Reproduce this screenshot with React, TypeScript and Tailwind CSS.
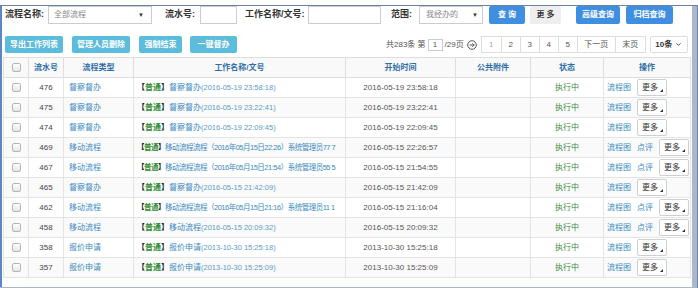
import { ChevronDown } from 'lucide-react'

interface Row {
  id: string
  type: string
  title: string
  extra: string
  time: string
  review: boolean
  long?: boolean
}

const rows: Row[] = [
  { id: '476', type: '督察督办', title: '督察督办', extra: '(2016-05-19 23:58:18)', time: '2016-05-19 23:58:18', review: false },
  { id: '475', type: '督察督办', title: '督察督办', extra: '(2016-05-19 23:22:41)', time: '2016-05-19 23:22:41', review: false },
  { id: '474', type: '督察督办', title: '督察督办', extra: '(2016-05-19 22:09:45)', time: '2016-05-19 22:09:45', review: false },
  { id: '469', type: '移动流程', title: '移动流程流程', extra: '（2016年05月15日22:26）系统管理员77 7', time: '2016-05-15 22:26:57', review: true, long: true },
  { id: '467', type: '移动流程', title: '移动流程流程', extra: '（2016年05月15日21:54）系统管理员55 5', time: '2016-05-15 21:54:55', review: true, long: true },
  { id: '465', type: '督察督办', title: '督察督办', extra: '(2016-05-15 21:42:09)', time: '2016-05-15 21:42:09', review: false },
  { id: '462', type: '移动流程', title: '移动流程流程', extra: '（2016年05月15日21:16）系统管理员11 1', time: '2016-05-15 21:16:04', review: true, long: true },
  { id: '458', type: '移动流程', title: '移动流程', extra: '(2016-05-15 20:09:32)', time: '2016-05-15 20:09:32', review: true },
  { id: '358', type: '报价申请', title: '报价申请', extra: '(2013-10-30 15:25:18)', time: '2013-10-30 15:25:18', review: false },
  { id: '357', type: '报价申请', title: '报价申请', extra: '(2013-10-30 15:25:09)', time: '2013-10-30 15:25:09', review: false },
]

const font = { fontFamily: '"Liberation Sans", "Noto Sans CJK SC", sans-serif' }

function Check() {
  return <span className="inline-block h-[9px] w-[9px] rounded-[2px] border border-[#b5b5b5] bg-gradient-to-b from-white to-[#e6e6e6] align-middle" />
}

function MoreButton() {
  return (
    <span className="relative inline-flex h-[17px] w-[30px] items-center justify-center rounded-[2px] border border-[#cfcfcf] bg-white pr-[4px] text-[8px] text-[#333]">
      更多
      <svg className="absolute bottom-[3px] right-[3px]" width="3" height="3" viewBox="0 0 3 3">
        <path d="M3 0V3H0Z" fill="#333" />
      </svg>
    </span>
  )
}

export default function App() {
  return (
    <div className="h-[288px] w-[698px] overflow-hidden bg-white text-[#333]" style={font}>
      <div className="h-[285px] w-[697px] border-b-[4px] border-r-[5px] border-[#a9b8cc] outline outline-1 outline-[#6c82a3]">
        <div className="h-full w-full border-l-2 border-[#5d86c2]">
          {/* filter row */}
          <div className="mt-[6px] flex h-[18px] items-center whitespace-nowrap pl-[3px] text-[9px]">
            <span className="w-[43px] font-bold">流程名称:</span>
            <div className="flex h-[18px] w-[104px] items-center justify-between border border-[#ccc] pl-[5px] pr-[7px] text-[8px] text-[#888]">
              <span>全部流程</span>
              <span className="text-[6px] text-[#333]">▼</span>
            </div>
            <span className="ml-[13px] w-[35px] font-bold">流水号:</span>
            <div className="h-[18px] w-[37px] border border-[#ccc]" />
            <span className="ml-[8px] w-[63px] font-bold">工作名称/文号:</span>
            <div className="h-[18px] w-[73px] border border-[#ccc]" />
            <span className="ml-[10px] w-[28px] font-bold">范围:</span>
            <div className="flex h-[18px] w-[64px] items-center justify-between border border-[#ccc] pl-[6px] pr-[4px] text-[8px] text-[#888]">
              <span>我经办的</span>
              <span className="text-[6px] text-[#333]">▼</span>
            </div>
            <span className="ml-[6px] flex h-[18px] w-[36px] items-center justify-center rounded-[2px] bg-[#3f8ee0] text-[8px] font-bold text-white">查 询</span>
            <span className="ml-[5px] flex h-[18px] w-[31px] items-center justify-center rounded-[2px] bg-[#eeeeee] text-[8px] font-bold text-[#333]">更 多</span>
            <span className="ml-[15px] flex h-[18px] w-[44px] items-center justify-center rounded-[2px] bg-[#3f8ee0] text-[8px] font-bold text-white">高级查询</span>
            <span className="ml-[6px] flex h-[18px] w-[47px] items-center justify-center rounded-[2px] bg-[#3f8ee0] text-[8px] font-bold text-white">归档查询</span>
          </div>

          {/* actions + pagination */}
          <div className="mt-[12px] flex h-[17px] items-center whitespace-nowrap pl-[3px] text-[8px]">
            <span className="flex h-[17px] w-[58px] items-center justify-center rounded-[2px] bg-[#5bbcdc] font-bold text-white">导出工作列表</span>
            <span className="ml-[9px] flex h-[17px] w-[58px] items-center justify-center rounded-[2px] bg-[#5bbcdc] font-bold text-white">管理人员删除</span>
            <span className="ml-[9px] flex h-[17px] w-[43px] items-center justify-center rounded-[2px] bg-[#5bbcdc] font-bold text-white">强制结束</span>
            <span className="ml-[8px] flex h-[17px] w-[47px] items-center justify-center rounded-[2px] bg-[#5bbcdc] font-bold text-white">一键督办</span>

            <div className="ml-[149px] flex items-center text-[8px] text-[#555]">
              <span>共283条 第</span>
              <span className="mx-[2px] flex h-[12px] w-[15px] items-center justify-center border border-[#ccc] text-[8px]">1</span>
              <span>/29页</span>
              <svg className="ml-[3px]" width="10" height="10" viewBox="0 0 10 10" fill="none" stroke="#555" strokeWidth="1">
                <circle cx="5" cy="5" r="4.3" />
                <path d="M2.6 5H7.2M5.4 3.2 7.2 5 5.4 6.8" />
              </svg>
            </div>
            <div className="ml-[4px] flex h-[17px] items-stretch border border-[#ddd] text-[8px] text-[#555]">
              {['1', '2', '3', '4', '5'].map((p, i) => (
                <span key={p} className={`flex w-[19px] items-center justify-center ${i > 0 ? 'border-l border-[#ddd]' : ''} ${i === 0 ? 'text-[#aaa]' : ''}`}>{p}</span>
              ))}
              <span className="flex w-[38px] items-center justify-center border-l border-[#ddd]">下一页</span>
              <span className="flex w-[30px] items-center justify-center border-l border-[#ddd]">末页</span>
            </div>
            <span className="ml-[4px] flex h-[17px] w-[38px] items-center justify-center gap-[3px] rounded-[2px] border border-[#ddd] text-[8px] font-bold text-[#333]">
              10条
              <ChevronDown size={7} strokeWidth={3} />
            </span>
          </div>

          {/* table */}
          <table className="ml-[1px] mt-[4px] w-[687px] table-fixed border-collapse text-[8px]">
            <colgroup>
              <col className="w-[25px]" />
              <col className="w-[35px]" />
              <col className="w-[70px]" />
              <col className="w-[212px]" />
              <col className="w-[110px]" />
              <col className="w-[75px]" />
              <col className="w-[73px]" />
              <col className="w-[87px]" />
            </colgroup>
            <thead>
              <tr className="h-[20px] bg-[#f9f9f9] text-[8px] font-bold text-[#2f6fa8]">
                <th className="border border-[#dedede]"><Check /></th>
                <th className="border border-[#dedede]">流水号</th>
                <th className="border border-[#dedede]">流程类型</th>
                <th className="border border-[#dedede]">工作名称/文号</th>
                <th className="border border-[#dedede]">开始时间</th>
                <th className="border border-[#dedede]">公共附件</th>
                <th className="border border-[#dedede]">状态</th>
                <th className="border border-[#dedede]">操作</th>
              </tr>
            </thead>
            <tbody>
              {rows.map((r, i) => (
                <tr key={r.id} className={`h-[20px] ${i % 2 === 1 ? 'bg-[#fafafa]' : 'bg-white'}`}>
                  <td className="border border-[#e4e4e4] text-center"><Check /></td>
                  <td className="border border-[#e4e4e4] text-center text-[#444]">{r.id}</td>
                  <td className="border border-[#e4e4e4] pl-[5px] text-[#3a8abf]">{r.type}</td>
                  <td className={`overflow-hidden whitespace-nowrap border border-[#e4e4e4] pl-[3px] ${r.long ? 'text-[7.5px] tracking-[-0.5px]' : ''}`}>
                    <span className="font-bold text-[#222]">【</span>
                    <span className="font-bold text-[#2e8b34]">普通</span>
                    <span className="font-bold text-[#222]">】</span>
                    <span className="text-[#3a8abf]">{r.title}</span>
                    <span className={r.long ? 'text-[#3a8abf]' : 'text-[7.5px] text-[#5a9cc8]'}>{r.extra}</span>
                  </td>
                  <td className="border border-[#e4e4e4] text-center text-[#555]">{r.time}</td>
                  <td className="border border-[#e4e4e4]" />
                  <td className="border border-[#e4e4e4] text-center text-[#3c8c3c]">执行中</td>
                  <td className="whitespace-nowrap border border-[#e4e4e4] pl-[3px]">
                    <span className="text-[#3a8abf]">流程图</span>
                    {r.review && <span className="ml-[6px] text-[#3a8abf]">点评</span>}
                    <span className="ml-[6px] inline-block align-middle"><MoreButton /></span>
                  </td>
                </tr>
              ))}
            </tbody>
          </table>
        </div>
      </div>
    </div>
  )
}
